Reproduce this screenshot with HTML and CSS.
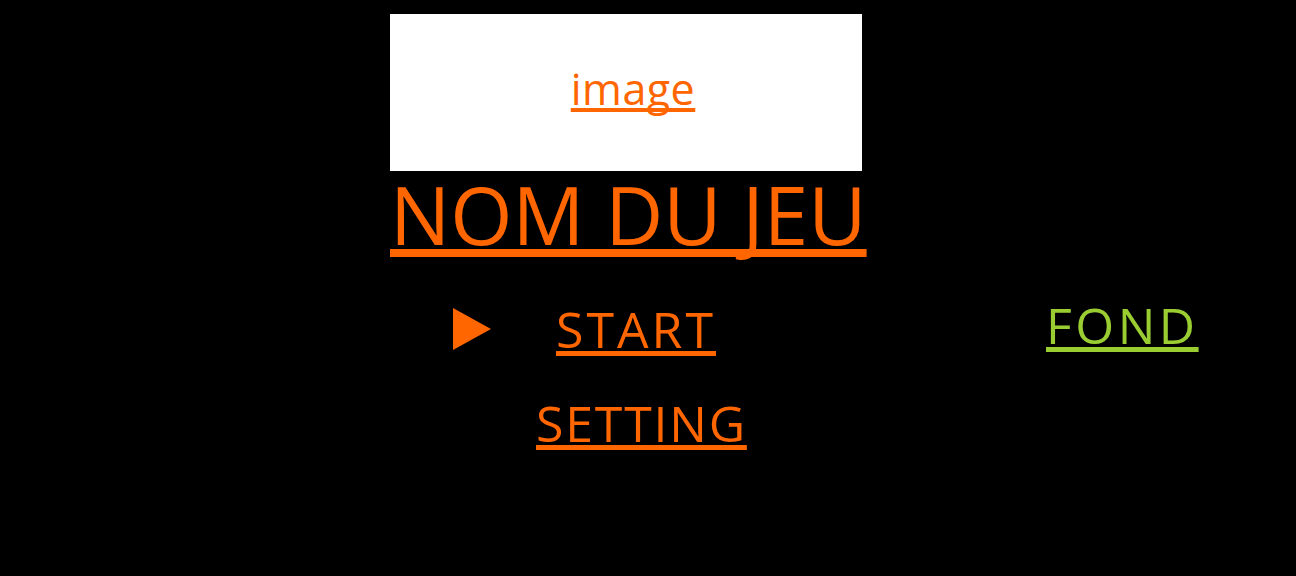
FILE: index.html
```html
<!DOCTYPE html>
<html lang="fr">
<head>
<meta charset="utf-8">
<title>NOM DU JEU</title>
<link rel="stylesheet" href="styles.css">
</head>
<body>
<div class="screen">
  <div class="spacer"></div>
  <main class="center">
    <div class="image-box"><a href="#" class="link image-link">image</a></div>
    <h1 class="title"><a href="#" class="link">NOM DU JEU</a></h1>
    <nav class="menu">
      <div class="menu-row start-row">
        <svg class="cursor" width="38" height="42" viewBox="0 0 38 42"><polygon points="0,0 38,21 0,42" fill="#ff6600"/></svg>
        <a href="#" class="link menu-item start">START</a>
      </div>
      <div class="menu-row setting-row">
        <a href="#" class="link menu-item setting">SETTING</a>
      </div>
    </nav>
  </main>
  <aside class="side">
    <a href="#" class="link fond">FOND</a>
  </aside>
</div>
</body>
</html>
```
FILE: styles.css
```css
html, body {
  margin: 0;
  padding: 0;
  background: #000;
}
body {
  font-family: "Open Sans", "Noto Sans", sans-serif;
  width: 1296px;
  height: 576px;
  overflow: hidden;
}
.screen {
  display: grid;
  grid-template-columns: 390px 472px 1fr;
}
.link {
  color: #ff6600;
  text-decoration: underline;
  text-decoration-skip-ink: none;
}
.image-box {
  margin-top: 14px;
  height: 149px;
  padding-bottom: 8px;
  padding-left: 14px;
  background: #fff;
  display: flex;
  align-items: center;
  justify-content: center;
}
.image-link {
  font-size: 43px;
  line-height: 1;
  letter-spacing: 0.5px;
}
.title {
  margin: 0;
  font-weight: normal;
  font-size: 80px;
  line-height: 1;
  text-align: center;
  white-space: nowrap;
  padding-top: 3px;
}
.menu {
  display: flex;
  flex-direction: column;
  align-items: flex-start;
}
.menu-row {
  display: flex;
  align-items: center;
}
.start-row {
  margin-top: 50px;
  padding-left: 63px;
}
.setting-row {
  margin-top: 44px;
  padding-left: 146px;
}
.menu-item {
  font-size: 50px;
  line-height: 1;
}
.start {
  letter-spacing: 3px;
}
.setting {
  letter-spacing: 1.8px;
}
.cursor {
  margin-right: 65px;
}
.side {
  padding-top: 300px;
  padding-left: 184px;
}
.fond {
  color: #9acd32;
  font-size: 50px;
  line-height: 1;
  letter-spacing: 3.5px;
}
```
